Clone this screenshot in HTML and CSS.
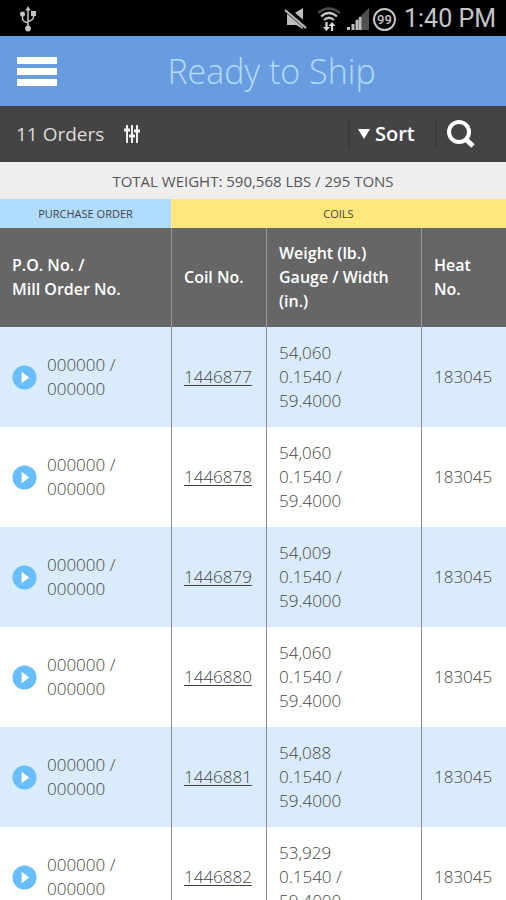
FILE: index.html
```html
<!DOCTYPE html>
<html lang="en">
<head>
<meta charset="utf-8">
<meta name="viewport" content="width=device-width, initial-scale=1">
<title>Ready to Ship</title>
<link rel="stylesheet" href="styles.css">
</head>
<body>
<svg class="sprite" aria-hidden="true">
  <symbol id="play" viewBox="0 0 26 26"><circle cx="13" cy="13" r="12.5" fill="#68bdfb"/><path d="M10 7v12l8-6z" fill="#fff"/></symbol>
</svg>
<div class="status">
  <svg class="usb" viewBox="0 0 18 26" fill="none" stroke="#c4c4c4" stroke-width="1.500" aria-hidden="true"><path d="M9 3v19M3.500 9v3.500q0 3 5.500 4.500M14.500 8v3q0 3-5.500 4.500"/><path d="M9 0l2.600 4.500H6.400z" fill="#c4c4c4" stroke="none"/><circle cx="9" cy="22.500" r="2.900" fill="#c4c4c4" stroke="none"/><circle cx="3.500" cy="8" r="2.500" fill="#c4c4c4" stroke="none"/><path d="M12 5h5v5h-5z" fill="#c4c4c4" stroke="none"/></svg>
  <div class="status-right">
    <svg class="mute" viewBox="0 0 24 24" aria-hidden="true"><path d="M3 7h6l10-6v21l-7-4H3z" fill="#bdbdbd"/><path d="M2 2l21 18" stroke="#000" stroke-width="6"/><path d="M1 3l21 18" stroke="#bdbdbd" stroke-width="2.200"/></svg>
    <svg class="wifi" viewBox="0 0 24 26" fill="none" stroke-width="2.200" aria-hidden="true"><path d="M1 7q11-9 22 0" stroke="#4c4c4c"/><path d="M4 10.500q8-7 16 0M7 14q5-4.500 10 0" stroke="#c4c4c4"/><path d="M9.500 16v7M15 25v-7" stroke="#d8d8d8"/><path d="M6 21h7l-3.500 4zM11.500 20h7L15 16z" fill="#d8d8d8"/></svg>
    <svg class="signal" viewBox="0 0 24 24" aria-hidden="true"><path d="M10 13.500L23 1v22H10z" fill="#505050"/><path d="M1 20h3v3H1zM5.500 17h3v6h-3zM9.500 13h3v10h-3zM13 10h2.500v13H13z" fill="#bdbdbd"/></svg>
    <span class="battery">99</span>
    <span class="clock">1:40 PM</span>
  </div>
</div>
<header class="title-bar">
  <button class="menu" type="button" aria-label="Menu"><span></span><span></span><span></span></button>
  <h1>Ready to Ship</h1>
</header>
<div class="toolbar">
  <span class="count">11 Orders</span>
  <button class="filter" type="button" aria-label="Filter"><svg viewBox="0 0 16 18" aria-hidden="true"><path d="M3 0v18M8 0v18M13 0v18" stroke="#f2f2f2" stroke-width="2"/><path d="M0 5h6M5 11h6M10 6h6" stroke="#f2f2f2" stroke-width="3"/></svg></button>
  <div class="actions">
    <button class="sort" type="button"><svg viewBox="0 0 12 10" aria-hidden="true"><path d="M0 0h12L6 10z" fill="#fff"/></svg>Sort</button>
    <button class="search" type="button" aria-label="Search"><svg viewBox="0 0 30 30" fill="none" stroke="#fff" aria-hidden="true"><circle cx="13" cy="13" r="10" stroke-width="4"/><path d="M19.500 20l7.500 7" stroke-width="5"/></svg></button>
  </div>
</div>
<p class="total">TOTAL WEIGHT: 590,568 LBS / 295 TONS</p>
<main>
<table>
  <colgroup><col class="c-order"><col class="c-coil"><col class="c-weight"><col class="c-heat"></colgroup>
  <thead>
    <tr class="groups"><th class="g-order" scope="colgroup">PURCHASE ORDER</th><th class="g-coils" colspan="3" scope="colgroup">COILS</th></tr>
    <tr class="heads"><th scope="col">P.O. No. /<br>Mill Order No.</th><th scope="col">Coil No.</th><th scope="col">Weight (lb.)<br>Gauge / Width<br>(in.)</th><th scope="col">Heat<br>No.</th></tr>
  </thead>
  <tbody>
    <tr><td><div class="order"><button type="button" aria-label="Expand order"><svg><use href="#play"/></svg></button><span>000000 /<br>000000</span></div></td><td><a href="#1446877">1446877</a></td><td>54,060<br>0.1540 /<br>59.4000</td><td>183045</td></tr>
    <tr><td><div class="order"><button type="button" aria-label="Expand order"><svg><use href="#play"/></svg></button><span>000000 /<br>000000</span></div></td><td><a href="#1446878">1446878</a></td><td>54,060<br>0.1540 /<br>59.4000</td><td>183045</td></tr>
    <tr><td><div class="order"><button type="button" aria-label="Expand order"><svg><use href="#play"/></svg></button><span>000000 /<br>000000</span></div></td><td><a href="#1446879">1446879</a></td><td>54,009<br>0.1540 /<br>59.4000</td><td>183045</td></tr>
    <tr><td><div class="order"><button type="button" aria-label="Expand order"><svg><use href="#play"/></svg></button><span>000000 /<br>000000</span></div></td><td><a href="#1446880">1446880</a></td><td>54,060<br>0.1540 /<br>59.4000</td><td>183045</td></tr>
    <tr><td><div class="order"><button type="button" aria-label="Expand order"><svg><use href="#play"/></svg></button><span>000000 /<br>000000</span></div></td><td><a href="#1446881">1446881</a></td><td>54,088<br>0.1540 /<br>59.4000</td><td>183045</td></tr>
    <tr><td><div class="order"><button type="button" aria-label="Expand order"><svg><use href="#play"/></svg></button><span>000000 /<br>000000</span></div></td><td><a href="#1446882">1446882</a></td><td>53,929<br>0.1540 /<br>59.4000</td><td>183045</td></tr>
  </tbody>
</table>
</main>
</body>
</html>
```
FILE: styles.css
```css
* { box-sizing: border-box; }
body {
  margin: 0;
  height: 100vh;
  overflow: hidden;
  display: flex;
  flex-direction: column;
  background: #fff;
  color: #444;
  font-family: "Open Sans", "Noto Sans", sans-serif;
  font-size: 17px;
  line-height: 24px;
}
button {
  padding: 0;
  border: 0;
  background: none;
  color: inherit;
  font: inherit;
  display: flex;
  align-items: center;
}
svg { display: block; flex: none; }
.sprite { position: absolute; width: 0; height: 0; }

.status {
  flex: none;
  display: flex;
  align-items: center;
  justify-content: space-between;
  height: 36px;
  padding: 2px 10px 0 19px;
  background: #000;
  color: #c4c4c4;
  font-family: Roboto, sans-serif;
}
.usb { width: 18px; height: 26px; }
.status-right { display: flex; align-items: center; gap: 3px; }
.mute { width: 24px; height: 24px; }
.wifi { width: 24px; height: 26px; margin: 0 2px 0 6px; }
.signal { width: 24px; height: 24px; }
.battery {
  width: 23px;
  height: 23px;
  border: 2px solid #c4c4c4;
  border-radius: 50%;
  font-size: 13px;
  font-weight: 500;
  line-height: 19px;
  text-align: center;
}
.clock { margin-left: 5px; font-size: 25px; }

.title-bar {
  flex: none;
  display: grid;
  grid-template-columns: 40px 1fr 20px;
  align-items: center;
  height: 70px;
  padding-left: 17px;
  background: #699be0;
}
.menu { flex-direction: column; align-items: stretch; gap: 4px; width: 40px; }
.menu span { height: 7px; background: #fff; }
.title-bar h1 {
  margin: 0;
  color: #afdcff;
  font-size: 34px;
  font-weight: 300;
  line-height: 48px;
  text-align: center;
}

.toolbar {
  flex: none;
  display: flex;
  align-items: center;
  height: 56px;
  padding: 0 30px 0 16px;
  background: #444;
  color: #fff;
}
.count { color: #dcdcdc; font-size: 19px; }
.filter { margin-left: 20px; }
.filter svg { width: 16px; height: 18px; }
.actions { display: flex; margin-left: auto; }
.actions button { height: 30px; border-left: 2px solid #3a3a3a; }
.sort { gap: 5px; width: 87px; padding-left: 8px; font-size: 20px; font-weight: 600; }
.sort svg { width: 12px; height: 10px; }
.search { padding-left: 9px; }
.search svg { width: 30px; height: 30px; }

.total {
  flex: none;
  margin: 0;
  height: 37px;
  background: #eee;
  color: #555;
  font-size: 15px;
  line-height: 38px;
  text-align: center;
}

main { flex: 1; min-height: 0; overflow: hidden; }
table { width: 100%; border-collapse: separate; border-spacing: 0; table-layout: fixed; }
.c-coil { width: 95px; }
.c-weight { width: 155px; }
.c-heat { width: 85px; }
th, td { padding: 0 0 0 12px; text-align: left; vertical-align: middle; }
.groups th {
  height: 29px;
  padding: 0;
  color: #444;
  font-size: 11px;
  font-weight: 400;
  line-height: 16px;
  text-align: center;
}
.groups .g-order { background: #b0dcff; }
.groups .g-coils { background: #ffe77c; }
.heads th { height: 99px; padding-bottom: 1px; background: #666; color: #fff; font-size: 16px; font-weight: 600; }
.heads th + th { border-left: 1px solid #999; }
tbody td { height: 100px; background: #fff; font-weight: 300; white-space: nowrap; }
tbody tr:nth-child(odd) td { background: #daecfb; }
tbody td + td { border-left: 1px solid #8a8d91; }
.order { display: flex; align-items: center; gap: 10px; }
.order svg { width: 25px; height: 25px; }
a { color: inherit; text-decoration: underline; text-underline-offset: 2px; }
```
